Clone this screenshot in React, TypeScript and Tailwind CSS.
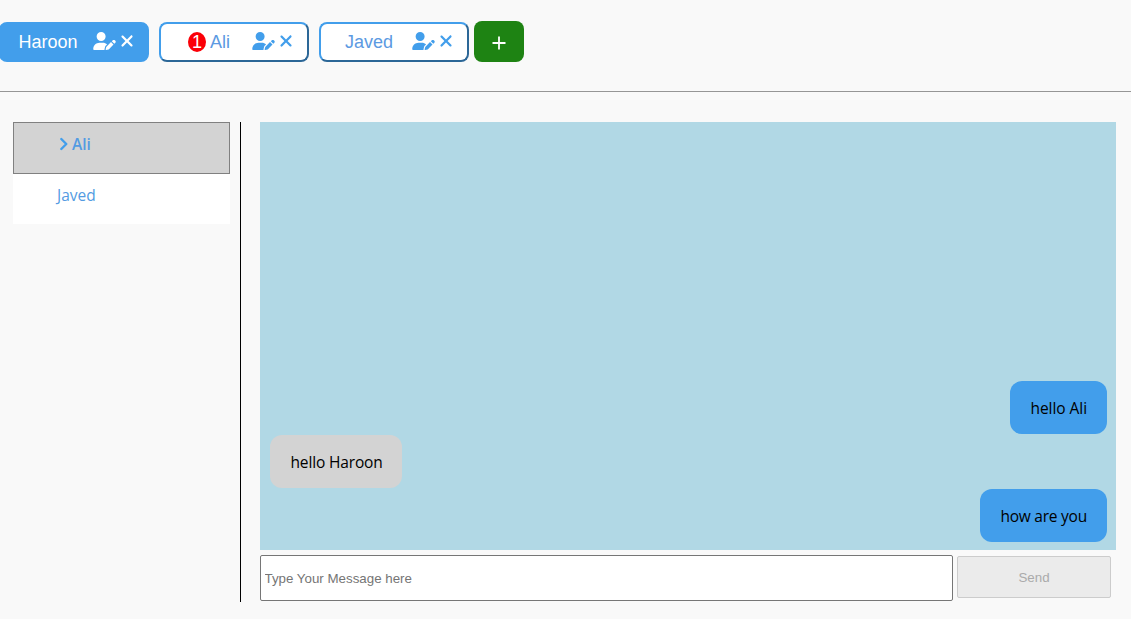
import React from "react";
import { FaUserPen, FaXmark } from "react-icons/fa6";

type TabProps = { name: string; active?: boolean; unread?: number; pad: string };

function Tab({ name, active, unread, pad }: TabProps) {
  const look = active
    ? "bg-[#429eeb] border-[#429eeb] text-white pr-3"
    : "bg-white border-t-[#429eeb] border-l-[#429eeb] border-b-[#2c6797] border-r-[#2c6797] text-[#5c9ae2] pr-[13px]";
  return (
    <div className={`flex h-10 w-[150px] shrink-0 items-center rounded-lg border-2 ${pad} ${look}`}>
      {unread ? (
        <span className="mr-1 flex h-5 w-[18px] shrink-0 items-center justify-center rounded-[50%] bg-[#fb0007] text-[18px] leading-none text-white">
          {unread}
        </span>
      ) : null}
      <span className="text-[18px] leading-none">{name}</span>
      <span className={`ml-auto flex items-center pb-[2px] ${active ? "text-white" : "text-[#429eeb]"}`}>
        <FaUserPen className="mr-[3px] h-[18px] w-[23px]" />
        <FaXmark className="h-[18px] w-[16px]" />
      </span>
    </div>
  );
}

function Message({ text, mine, size }: { text: string; mine?: boolean; size: string }) {
  return (
    <div
      className={`h-[53px] whitespace-nowrap rounded-xl pl-[20.5px] pt-[15px] text-[15.5px] leading-6 text-black ${size} ${
        mine ? "self-end bg-[#429eeb]" : "self-start bg-[#d3d3d3]"
      }`}
    >
      {text}
    </div>
  );
}

export default function App() {
  return (
    <div className="h-[619px] w-full overflow-hidden bg-[#f9f9f9] font-['Open_Sans','Noto_Sans',sans-serif]">
      <header className="flex h-[92px] items-start border-b border-[#969696] pt-[21px] font-['Liberation_Sans',Arial,sans-serif]">
        <div className="-ml-px mt-px flex gap-2.5">
          <Tab name="Haroon" active pad="pl-[17.5px]" />
          <Tab name="Ali" unread={1} pad="pl-[27px]" />
          <Tab name="Javed" pad="pl-6" />
        </div>
        <button className="ml-[5px] flex h-[41px] w-[50px] items-center justify-center rounded-lg bg-[#1e8313] pt-[3px] text-white">
          <svg viewBox="0 0 14 14" className="h-3.5 w-3.5" stroke="currentColor" strokeWidth="1.8">
            <path d="M7 .5v13M.5 7h13" />
          </svg>
        </button>
      </header>
      <main className="flex pt-[30px]">
        <aside className="flex h-[480px] w-[241px] shrink-0 flex-col border-r border-black pl-[13px] pr-[10px]">
          <div className="flex h-[52px] items-start border border-[#808080] bg-[#d3d3d3] pl-[45px] pt-[9px] text-[#539be2]">
            <svg
              viewBox="0 0 10 14"
              className="mr-[3px] mt-[5px] h-3.5 w-2.5"
              fill="none"
              stroke="#429eeb"
              strokeWidth="2.4"
              strokeLinecap="round"
              strokeLinejoin="round"
            >
              <path d="M2.300 2l5 5-5 5" />
            </svg>
            <span className="text-[15.5px] font-semibold leading-6">Ali</span>
          </div>
          <div className="h-[50px] bg-white pl-[44px] pt-[9px] text-[15.5px] leading-6 text-[#539be2]">Javed</div>
        </aside>
        <section className="ml-[19px] w-[856px]">
          <div className="flex h-[428px] flex-col justify-end gap-px bg-[#b1d8e5] pb-2 pl-2.5 pr-[9px]">
            <Message text="hello Ali" mine size="w-[97px] tracking-[-0.05px]" />
            <Message text="hello Haroon" size="w-[132px] tracking-[-0.15px]" />
            <Message text="how are you" mine size="w-[127px] tracking-[-0.25px]" />
          </div>
          <div className="flex items-start gap-1 pt-[5px] font-['Liberation_Sans',Arial,sans-serif]">
            <input
              className="h-[46px] w-[693px] rounded-[2px] border border-[#767676] bg-white pl-[3.500px] text-[13.333px] outline-none placeholder:text-[#757575]"
              placeholder="Type Your Message here"
            />
            <button disabled className="mt-px h-[42px] w-[154px] rounded-[2px] border border-[#cccccc] bg-[#ebebeb] pt-0.5 text-[13.333px] text-[#aaaaaa]">
              Send
            </button>
          </div>
        </section>
      </main>
    </div>
  );
}
